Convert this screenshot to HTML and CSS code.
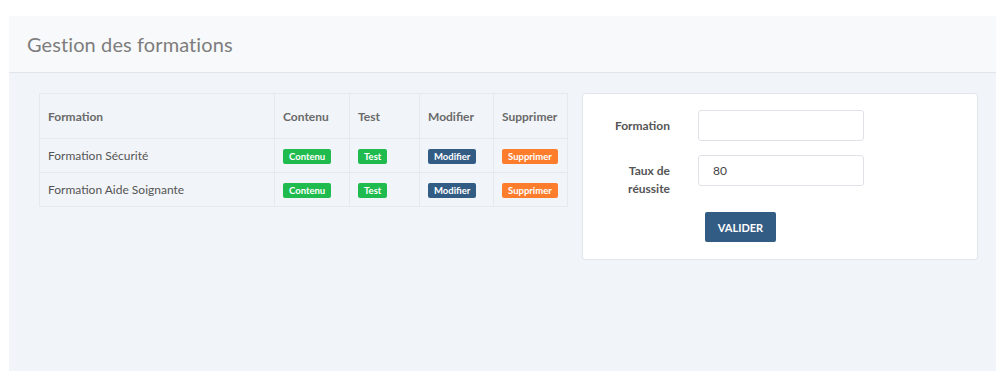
FILE: index.html
```html
<!DOCTYPE html>
<html lang="fr">
<head>
<meta charset="utf-8">
<title>Gestion des formations</title>
<link rel="stylesheet" href="styles.css">
</head>
<body>
<div class="app">
  <header class="page-header">
    <h1 class="page-title">Gestion des formations</h1>
  </header>
  <main class="content">
    <table class="formations">
      <thead>
        <tr>
          <th class="col-name">Formation</th>
          <th class="col-contenu">Contenu</th>
          <th class="col-test">Test</th>
          <th class="col-modif">Modifier</th>
          <th class="col-suppr">Supprimer</th>
        </tr>
      </thead>
      <tbody>
        <tr>
          <td>Formation Sécurité</td>
          <td><span class="badge badge-green">Contenu</span></td>
          <td><span class="badge badge-green">Test</span></td>
          <td><span class="badge badge-blue">Modifier</span></td>
          <td><span class="badge badge-orange">Supprimer</span></td>
        </tr>
        <tr>
          <td>Formation Aide Soignante</td>
          <td><span class="badge badge-green">Contenu</span></td>
          <td><span class="badge badge-green">Test</span></td>
          <td><span class="badge badge-blue">Modifier</span></td>
          <td><span class="badge badge-orange">Supprimer</span></td>
        </tr>
      </tbody>
    </table>
    <form class="form-card">
      <div class="form-row">
        <label class="form-label" for="f-name">Formation</label>
        <input class="form-input" id="f-name" type="text" value="">
      </div>
      <div class="form-row">
        <label class="form-label" for="f-taux">Taux de réussite</label>
        <input class="form-input" id="f-taux" type="text" value="80">
      </div>
      <div class="form-actions">
        <button class="btn-submit" type="button">VALIDER</button>
      </div>
    </form>
  </main>
</div>
</body>
</html>
```

FILE: styles.css
```css
* { box-sizing: border-box; }
html, body { margin: 0; padding: 0; background: #ffffff; }
body { font-family: Lato, "Open Sans", "Liberation Sans", sans-serif; color: #555; }

.app {
  margin: 16px 8px 0 9px;
  height: 355px;
  background: #f1f4f8;
  display: flex;
  flex-direction: column;
}

.page-header {
  height: 57px;
  background: #f8f9fa;
  border-bottom: 1px solid #dfe5eb;
  display: flex;
  align-items: center;
  padding-left: 18px;
}
.page-title {
  margin: 0;
  font-size: 20px;
  font-weight: 400;
  color: #7d7d7d;
  letter-spacing: 0.1px;
}

.content {
  display: flex;
  align-items: flex-start;
  padding: 20px 18px 0 30px;
  gap: 14px;
}

.formations {
  border-collapse: collapse;
  width: 529px;
  font-size: 12px;
  border: 1px solid #e6eaee;
}
.formations th, .formations td {
  border: 1px solid #e6eaee;
  text-align: left;
  padding: 0 8px;
}
.formations th {
  height: 45px;
  font-weight: 700;
  color: #6a6a6a;
}
.formations td {
  height: 34px;
  color: #555;
}
.col-name { width: 235px; }
.col-contenu { width: 75px; }
.col-test { width: 70px; }
.col-modif { width: 74px; }

.badge {
  display: inline-block;
  height: 15px;
  line-height: 15px;
  padding: 0 6px;
  font-size: 9.5px;
  font-weight: 700;
  color: #fff;
  border-radius: 2px;
  vertical-align: middle;
}
.badge-green { background: #1fbb4f; }
.badge-blue { background: #335c85; }
.badge-orange { background: #fd7d2c; }

.form-card {
  width: 396px;
  background: #fff;
  border: 1px solid #e1e6eb;
  border-radius: 3px;
  padding: 16px 18px 17px 18px;
  display: flex;
  flex-direction: column;
  gap: 14px;
}
.form-row {
  display: flex;
  align-items: flex-start;
  gap: 28px;
}
.form-label {
  width: 69px;
  text-align: right;
  font-size: 12px;
  font-weight: 700;
  line-height: 18px;
  padding-top: 7px;
  color: #555;
}
.form-input {
  width: 166px;
  height: 31px;
  border: 1px solid #dfe3e8;
  border-radius: 3px;
  padding: 0 14px;
  font-family: inherit;
  font-size: 12px;
  color: #444;
  background: #fff;
  outline: none;
}
.form-actions {
  padding-left: 104px;
}
.btn-submit {
  width: 71px;
  height: 30px;
  border: none;
  border-radius: 2px;
  background: #335c85;
  color: #fff;
  font-family: inherit;
  font-size: 11px;
  font-weight: 700;
  cursor: pointer;
}
```
